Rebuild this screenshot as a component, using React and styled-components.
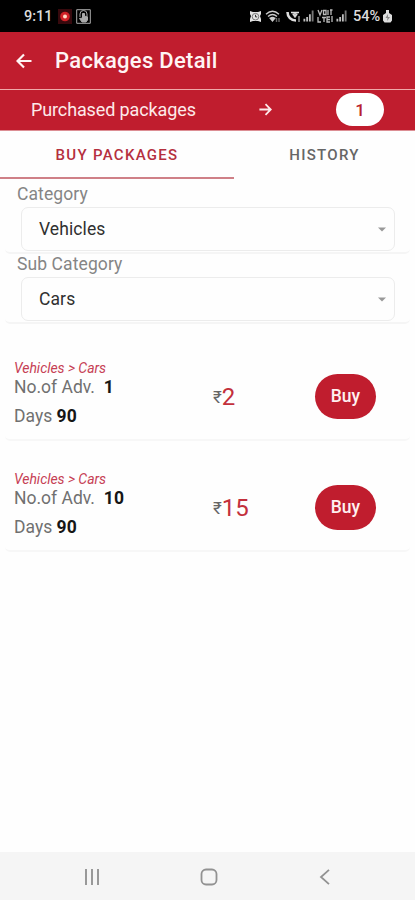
import React from 'react';
import styled, { createGlobalStyle } from 'styled-components';

const GlobalStyle = createGlobalStyle`
  * {
    box-sizing: border-box;
  }

  body {
    margin: 0;
    background: #fefefe;
    font-family: Roboto, 'Noto Sans', sans-serif;
  }

  button {
    font-family: inherit;
    border: none;
    padding: 0;
    background: none;
  }
`;

const Screen = styled.div`
  display: flex;
  flex-direction: column;
  width: 415px;
  height: 900px;
  overflow: hidden;
  background: #fefefe;
`;

const StatusBar = styled.div`
  display: flex;
  align-items: center;
  justify-content: space-between;
  flex: none;
  height: 32px;
  padding: 0 22px 0 24px;
  background: #000;
  color: #dcdcdc;
  font-size: 14px;
  font-weight: 500;
`;

const StatusGroup = styled.div`
  display: flex;
  align-items: center;
  gap: ${(props) => props.$gap};
`;

const Clock = styled.span`
  width: 30px;
  font-size: 14.5px;
  white-space: nowrap;
`;

const Battery = styled.span`
  width: 29px;
  margin-left: 3px;
  margin-right: -3px;
  font-size: 14.5px;
`;

const Header = styled.header`
  display: flex;
  align-items: center;
  flex: none;
  height: 57px;
  padding-left: 16px;
  gap: 23px;
  background: #c01d2e;
  color: #fff4f4;
`;

const Title = styled.h1`
  margin: 0;
  font-size: 22px;
  font-weight: 500;
  line-height: 26px;
  letter-spacing: 0.3px;
`;

const PurchasedBar = styled.div`
  display: grid;
  grid-template-columns: 228px 77px 48px;
  align-items: center;
  flex: none;
  height: 42px;
  padding: 0 0 1px 31px;
  border-top: 1px solid #f0a9a9;
  border-bottom: 1px solid #dc8e94;
  background: #c01d2e;
  color: #fdeaea;
  font-size: 18px;
  letter-spacing: -0.12px;
`;

const CountBadge = styled.span`
  display: flex;
  align-items: center;
  justify-content: center;
  height: 33px;
  border-radius: 17px;
  background: #fff;
  color: #b8202e;
  font-size: 17px;
  font-weight: 500;
`;

const Tabs = styled.nav`
  display: flex;
  flex: none;
  height: 48px;
`;

const Tab = styled.button`
  width: ${(props) => props.$width};
  padding-top: 2px;
  border-bottom: 2px solid ${(props) => (props.$active ? '#cf8087' : 'transparent')};
  color: ${(props) => (props.$active ? '#b5303e' : '#666')};
  font-size: 15px;
  font-weight: 500;
  letter-spacing: 1.3px;
`;

const Field = styled.div`
  flex: none;
  height: ${(props) => props.$height};
  margin: 0 5px;
  padding: ${(props) => props.$top} 15px 0 12px;
  border-bottom: 2px solid #f5f5f5;
  border-radius: 5px;
`;

const Label = styled.div`
  height: 23px;
  color: #858585;
  font-size: 17.5px;
  line-height: 20px;
  letter-spacing: 0.1px;
`;

const Select = styled.div`
  display: flex;
  align-items: center;
  justify-content: space-between;
  height: 44px;
  margin-left: 4px;
  padding: 0 8px 0 17px;
  border: 1.5px solid #ececec;
  border-radius: 7px;
  color: #303030;
  font-size: 17.5px;
  letter-spacing: 0.1px;
`;

const PackageList = styled.main`
  display: flex;
  flex-direction: column;
  flex: 1;
  padding-top: 6px;
`;

const PackageRow = styled.section`
  display: grid;
  grid-template-columns: 199px 102px 61px;
  align-items: start;
  height: 111px;
  margin: 0 5px;
  padding: 30px 0 0 9px;
  border-bottom: 2px solid #f7f7f7;
  border-radius: 5px;
`;

const Path = styled.div`
  height: 16px;
  color: #c64054;
  font-size: 14px;
  font-style: italic;
  line-height: 17px;
  letter-spacing: -0.05px;
`;

const Detail = styled.div`
  height: 29px;
  color: #707070;
  font-size: 17.5px;
  line-height: 22px;
  white-space: pre;

  b {
    color: #161616;
    font-weight: 700;
    letter-spacing: 0.2px;
  }
`;

const Price = styled.div`
  display: flex;
  align-items: center;
  height: 46px;
  margin-top: 14px;
  color: #c3303c;
  font-size: 24px;

  small {
    color: #666;
    font-size: 17px;
  }
`;

const BuyButton = styled.button`
  height: 45px;
  margin-top: 14px;
  padding-bottom: 1px;
  border-radius: 23px;
  background: #c01d2e;
  color: #fff0f0;
  font-size: 17.5px;
  font-weight: 500;
`;

const NavBar = styled.footer`
  display: flex;
  align-items: center;
  justify-content: space-between;
  flex: none;
  height: 48px;
  padding: 2px 81px 0 82px;
  background: #f5f5f5;
`;

function Arrow({ size, flip }) {
  return (
    <svg width={size} height={size} viewBox='0 0 16 16' fill='none' stroke='currentColor' strokeWidth='2.2'>
      <path d={flip ? 'M15.5 8H1.5M8 1.5L1.5 8L8 14.5' : 'M.5 8h14M8 1.5L14.5 8L8 14.5'} />
    </svg>
  );
}

function Caret() {
  return (
    <svg width='8' height='5' viewBox='0 0 8 5'>
      <path d='M0 .5h8L4 4.5z' fill='#999' />
    </svg>
  );
}

function RecordIcon() {
  return (
    <svg width='14' height='15' viewBox='0 0 14 15'>
      <path d='M0 0h14v15H0z' fill='#37090d' />
      <circle cx='7' cy='7.5' r='4.8' fill='#cf2026' />
      <circle cx='7' cy='7.5' r='2' fill='#ffd9c5' />
    </svg>
  );
}

function TouchIcon() {
  return (
    <svg width='15' height='15' viewBox='0 0 15 15' fill='none' stroke='#aaa'>
      <path d='M.7.7h13.6v13.6H.7z' />
      <path d='M4 8V5a3.5 3.5 0 0 1 7 0v3' />
      <path d='M6.5 9V4.5h2V7l3 1v3l-1.5 2H6L3.5 9.5z' fill='#aaa' />
    </svg>
  );
}

function AlarmIcon() {
  return (
    <svg width='13' height='13' viewBox='0 0 13 13'>
      <path d='M1 1l3 1h5l3-1v3l-1 2 1 3v3l-3-1H4l-3 1V9l1-3-1-2z' fill='#e4e4e4' />
      <circle cx='6.5' cy='6.7' r='3.3' fill='#e4e4e4' stroke='#777' />
      <path d='M6.5 4.8v2.1h1.7' fill='none' stroke='#333' />
    </svg>
  );
}

function WifiIcon() {
  return (
    <svg width='16' height='13' viewBox='0 0 16 13' fill='none' stroke='#ccc' strokeWidth='1.4'>
      <path d='M1 4.2Q7.5-1.5 14 4.2M3 6.5Q7.5 2.5 12 6.5M5 8.7Q7.5 6.5 10 8.7' />
      <path d='M5.5 8.5L7.5 11l2-2.5z' fill='#ccc' />
      <path d='M11.5 8v4M14 12V8' stroke='#666' />
    </svg>
  );
}

function CallWifiIcon() {
  return (
    <svg width='16' height='13' viewBox='-2 0 16 13' fill='none' stroke='#ddd'>
      <path d='M1.5 2C1.5 7 5 10.5 10 10.5' strokeWidth='2.6' />
      <path d='M5 2.5h8M6.5 4.5q2.5-1 5 0' strokeWidth='1.6' />
      <path d='M7.5 5.5h3L9 7.5zM13 6v6' fill='#ddd' />
    </svg>
  );
}

function SignalIcon() {
  return (
    <svg width='11' height='12' viewBox='0 0 12 12' strokeWidth='2' stroke='#bdbdbd'>
      <path d='M1.5 9v3M4.5 7v5M7.5 4v8' />
      <path d='M10.5 0v12' stroke='#777' />
    </svg>
  );
}

function VolteIcon() {
  return (
    <svg width='16' height='14' viewBox='0 0 16 14' fill='none' stroke='#bbb' strokeWidth='1.3'>
      <path d='M1 1l2 5 2-5M6.5 1.5h2.5v4H6.5zM11 1v5M13 1h2.5M14 1v5' />
      <path d='M1 8v5h3M5 8.5h4M7 8.5V13M13 8h-3v5h3M10 10.5h3M15 7v6' />
    </svg>
  );
}

function ChargeIcon() {
  return (
    <svg width='11' height='14' viewBox='0 0 11 14'>
      <path d='M4 1h3v3l3 2v5.5l-1.5 2h-6L1 11.5V6l3-2z' fill='#ddd' />
      <path d='M6 5L3.5 9h2l-.5 3 3-4H6z' fill='#888' />
    </svg>
  );
}

function PackageItem({ path, adv, days, price }) {
  return (
    <PackageRow>
      <div>
        <Path>{path}</Path>
        <Detail>
          No.of Adv.  <b>{adv}</b>
        </Detail>
        <Detail>
          Days <b>{days}</b>
        </Detail>
      </div>
      <Price>
        <small>₹</small>
        {price}
      </Price>
      <BuyButton>Buy</BuyButton>
    </PackageRow>
  );
}

function App() {
  return (
    <Screen>
      <GlobalStyle />
      <StatusBar>
        <StatusGroup $gap='4px'>
          <Clock>9:11</Clock>
          <RecordIcon />
          <TouchIcon />
        </StatusGroup>
        <StatusGroup $gap='3px'>
          <AlarmIcon />
          <WifiIcon />
          <CallWifiIcon />
          <SignalIcon />
          <VolteIcon />
          <SignalIcon />
          <Battery>54%</Battery>
          <ChargeIcon />
        </StatusGroup>
      </StatusBar>
      <Header>
        <Arrow size={16} flip />
        <Title>Packages Detail</Title>
      </Header>
      <PurchasedBar>
        <span>Purchased packages</span>
        <Arrow size={13} />
        <CountBadge>1</CountBadge>
      </PurchasedBar>
      <Tabs>
        <Tab $active $width='234px'>BUY PACKAGES</Tab>
        <Tab $width='181px'>HISTORY</Tab>
      </Tabs>
      <Field $height='75px' $top='5px'>
        <Label>Category</Label>
        <Select>
          Vehicles
          <Caret />
        </Select>
      </Field>
      <Field $height='70px' $top='0'>
        <Label>Sub Category</Label>
        <Select>
          Cars
          <Caret />
        </Select>
      </Field>
      <PackageList>
        <PackageItem path='Vehicles > Cars' adv='1' days='90' price='2' />
        <PackageItem path='Vehicles > Cars' adv='10' days='90' price='15' />
      </PackageList>
      <NavBar>
        <svg width='20' height='16' viewBox='0 0 20 16' stroke='#999' strokeWidth='2'>
          <path d='M4 0v16M10 0v16M16 0v16' />
        </svg>
        <svg width='18' height='18' viewBox='0 0 18 18' fill='none' stroke='#929292' strokeWidth='1.8'>
          <rect x='1.5' y='1.5' width='15' height='15' rx='4.5' />
        </svg>
        <svg width='18' height='16' viewBox='0 0 18 16' fill='none' stroke='#929292' strokeWidth='1.8'>
          <path d='M13 .8L5 8l8 7.2' />
        </svg>
      </NavBar>
    </Screen>
  );
}

export default App;
